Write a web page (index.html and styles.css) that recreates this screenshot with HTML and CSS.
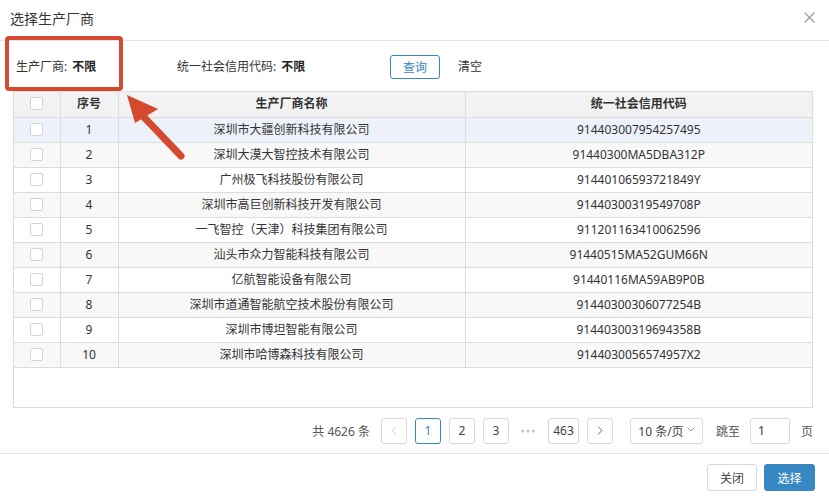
FILE: index.html
```html
<!DOCTYPE html>
<html lang="zh-CN">
<head>
<meta charset="utf-8">
<title>选择生产厂商</title>
<link rel="stylesheet" href="styles.css">
</head>
<body>
<div class="dialog">
  <div class="dlg-header">
    <span class="dlg-title">选择生产厂商</span>
    <span class="dlg-close">
      <svg width="11" height="11" viewBox="0 0 11 11"><path d="M0.5 0.5L10.5 10.5M10.5 0.5L0.5 10.5" stroke="#999" stroke-width="1.1" fill="none"/></svg>
    </span>
  </div>
  <div class="dlg-body">
    <div class="filters">
      <div class="filter f1"><span class="lbl">生产厂商:</span><b>不限</b></div>
      <div class="filter f2"><span class="lbl">统一社会信用代码:</span><b>不限</b></div>
      <button class="btn-outline">查询</button>
      <span class="link-clear">清空</span>
    </div>
    <div class="grid-wrap">
      <table class="grid">
        <colgroup><col class="c-chk"><col class="c-no"><col class="c-name"><col></colgroup>
        <thead>
          <tr><th><span class="chk"></span></th><th>序号</th><th>生产厂商名称</th><th>统一社会信用代码</th></tr>
        </thead>
        <tbody>
          <tr class="sel"><td><span class="chk"></span></td><td>1</td><td>深圳市大疆创新科技有限公司</td><td>914403007954257495</td></tr>
          <tr class="alt"><td><span class="chk"></span></td><td>2</td><td>深圳大漠大智控技术有限公司</td><td>91440300MA5DBA312P</td></tr>
          <tr><td><span class="chk"></span></td><td>3</td><td>广州极飞科技股份有限公司</td><td>91440106593721849Y</td></tr>
          <tr class="alt"><td><span class="chk"></span></td><td>4</td><td>深圳市高巨创新科技开发有限公司</td><td>91440300319549708P</td></tr>
          <tr><td><span class="chk"></span></td><td>5</td><td>一飞智控（天津）科技集团有限公司</td><td>911201163410062596</td></tr>
          <tr class="alt"><td><span class="chk"></span></td><td>6</td><td>汕头市众力智能科技有限公司</td><td>91440515MA52GUM66N</td></tr>
          <tr><td><span class="chk"></span></td><td>7</td><td>亿航智能设备有限公司</td><td>91440116MA59AB9P0B</td></tr>
          <tr class="alt"><td><span class="chk"></span></td><td>8</td><td>深圳市道通智能航空技术股份有限公司</td><td>91440300306077254B</td></tr>
          <tr><td><span class="chk"></span></td><td>9</td><td>深圳市博坦智能有限公司</td><td>91440300319694358B</td></tr>
          <tr class="alt"><td><span class="chk"></span></td><td>10</td><td>深圳市哈博森科技有限公司</td><td>9144030056574957X2</td></tr>
        </tbody>
      </table>
    </div>
    <div class="pager">
      <span class="total">共 4626 条</span>
      <span class="pg disabled">
        <svg width="6" height="9" viewBox="0 0 6 9"><path d="M5 0.5L1 4.5L5 8.5" stroke="#ccc" stroke-width="1" fill="none"/></svg>
      </span>
      <span class="pg active">1</span>
      <span class="pg">2</span>
      <span class="pg">3</span>
      <span class="ellipsis">
        <svg width="14" height="4" viewBox="0 0 14 4"><circle cx="1.6" cy="2" r="1.5" fill="#c4c4c4"/><circle cx="7" cy="2" r="1.5" fill="#c4c4c4"/><circle cx="12.4" cy="2" r="1.5" fill="#c4c4c4"/></svg>
      </span>
      <span class="pg wide">463</span>
      <span class="pg">
        <svg width="6" height="9" viewBox="0 0 6 9"><path d="M1 0.5L5 4.5L1 8.5" stroke="#666" stroke-width="1" fill="none"/></svg>
      </span>
      <span class="size-sel">10 条/页<svg width="8" height="5" viewBox="0 0 8 5"><path d="M0.5 0.5L4 4L7.5 0.5" stroke="#999" stroke-width="1" fill="none"/></svg></span>
      <span class="jump">跳至</span>
      <span class="jump-input">1</span>
      <span class="page-lbl">页</span>
    </div>
  </div>
  <div class="dlg-footer">
    <button class="btn-default">关闭</button>
    <button class="btn-primary">选择</button>
  </div>

  <svg class="annot" width="829" height="501" viewBox="0 0 829 501">
    <rect x="7" y="38" width="114" height="51" rx="2" fill="none" stroke="#d54a2f" stroke-width="4"/>
    <line x1="181" y1="156" x2="140" y2="113" stroke="#d54a2f" stroke-width="7" stroke-linecap="round"/>
    <polygon points="127,95 135,123 158,109" fill="#d54a2f"/>
  </svg>
</div>
</body>
</html>
```
FILE: styles.css
```css
* { box-sizing: border-box; }
html, body { margin: 0; padding: 0; background: #fff; }
body {
  font-family: "Noto Sans", "Noto Sans CJK SC", sans-serif;
  font-size: 12px;
  color: #333;
}
.dialog { position: relative; width: 829px; height: 501px; }

.dlg-header {
  height: 41px;
  border-bottom: 1px solid #e3e3e3;
  display: flex;
  align-items: center;
  justify-content: space-between;
  padding: 0 14px 2px 10px;
}
.dlg-title { font-size: 14px; color: #333; line-height: 20px; }
.dlg-close { display: flex; width: 11px; height: 11px; margin-top: -4px; }

.dlg-body { padding: 0 16px 0 13px; }

.filters {
  height: 50px;
  display: flex;
  align-items: center;
  padding-left: 3px;
}
.filter { display: flex; align-items: center; white-space: nowrap; }
.filter .lbl { margin-right: 5px; color: #333; }
.filter b { font-weight: bold; color: #222; }
.f1 { width: 161px; }
.f2 { width: 213px; }
.btn-outline {
  width: 50px; height: 24px;
  border: 1px solid #3a86c5;
  border-radius: 3px;
  background: #fff;
  color: #3a86c5;
  font: inherit;
  padding: 0;
  margin-top: 2px;
}
.link-clear { margin-left: 18px; color: #333; }

.grid-wrap {
  border: 1px solid #dcdcdc;
  height: 317px;
  overflow: hidden;
}
.grid {
  width: 100%;
  border-collapse: collapse;
  table-layout: fixed;
}
.c-chk { width: 46px; }
.c-no { width: 58px; }
.c-name { width: 347px; }
.grid th, .grid td {
  height: 25px;
  padding: 0;
  text-align: center;
  border-right: 1px solid #dcdcdc;
  border-bottom: 1px solid #dcdcdc;
  line-height: 24px;
  white-space: nowrap;
}
.grid th:last-child, .grid td:last-child { border-right: none; }
.grid th { background: #f2f2f2; font-weight: bold; color: #333; }
.grid tr.sel td { background: #edf2fa; }
.grid tr.alt td { background: #f8f8f8; }
.chk {
  display: inline-block;
  width: 13px; height: 13px;
  border: 1px solid #d4d4d4;
  border-radius: 2px;
  background: #fff;
  vertical-align: middle;
  margin-top: -2px;
}

.pager {
  height: 45px;
  display: flex;
  align-items: center;
  justify-content: flex-end;
  gap: 8px;
  color: #555;
}
.total { margin-right: 3px; }
.pg {
  width: 26px; height: 26px;
  border: 1px solid #d9d9d9;
  border-radius: 3px;
  display: flex; align-items: center; justify-content: center;
  color: #444;
  background: #fff;
}
.pg.wide { width: 31px; }
.pg.active { border-color: #3a86c5; color: #3a86c5; }
.ellipsis { width: 23px; display: flex; align-items: center; justify-content: center; }
.size-sel {
  width: 73px; height: 26px;
  border: 1px solid #d9d9d9;
  border-radius: 3px;
  display: flex; align-items: center; justify-content: center;
  gap: 3px;
  margin-left: 9px;
  color: #444;
}
.size-sel svg { margin-top: -3px; }
.jump { margin-left: 5px; }
.jump-input {
  width: 40px; height: 26px;
  border: 1px solid #d9d9d9;
  border-radius: 3px;
  display: flex; align-items: center;
  padding-left: 7px;
  color: #333;
  margin-left: 2px;
}
.page-lbl { margin-left: 3px; }

.dlg-footer {
  border-top: 1px solid #e3e3e3;
  display: flex;
  justify-content: flex-end;
  gap: 7px;
  padding: 10px 14px 0 0;
}
.btn-default, .btn-primary {
  height: 27px;
  width: 50px;
  border-radius: 3px;
  font: inherit;
  padding: 0;
}
.btn-default { border: 1px solid #d9d9d9; background: #fff; color: #444; }
.btn-primary { width: 51px; border: 1px solid #3787c3; background: #3787c3; color: #fff; }

.annot { position: absolute; left: 0; top: 0; pointer-events: none; }
```
